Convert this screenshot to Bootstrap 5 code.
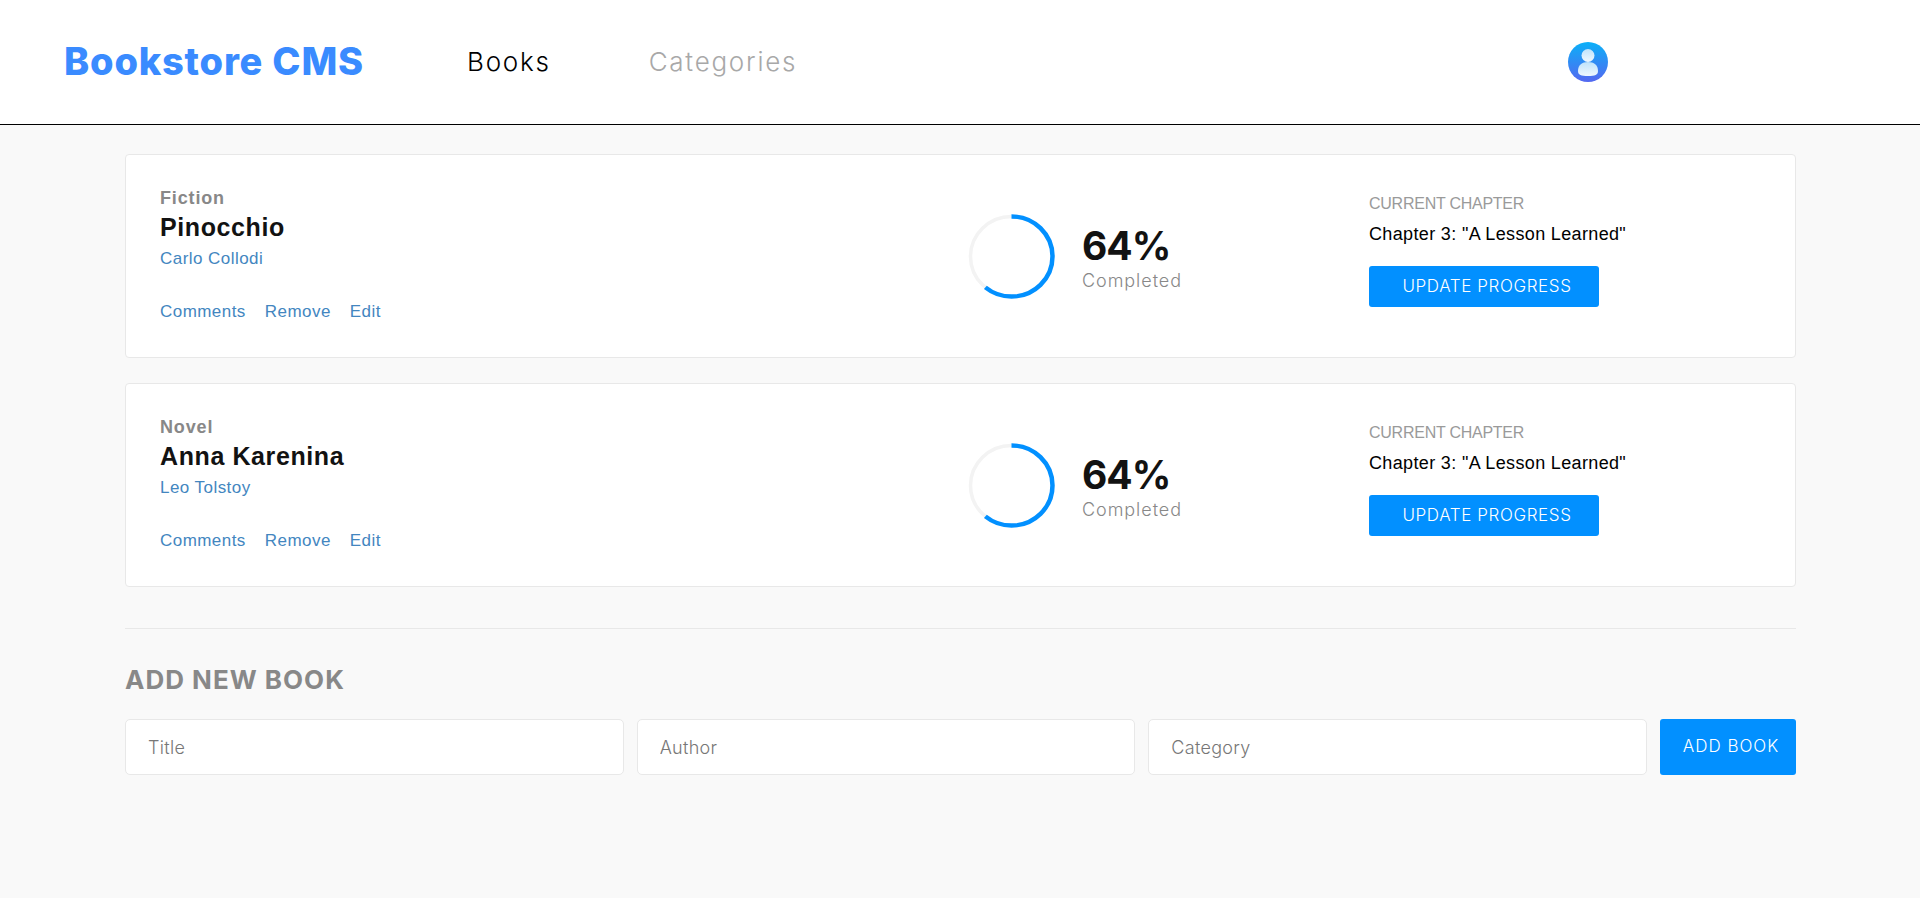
<!DOCTYPE html>
<html lang="en">
<head>
    <meta charset="UTF-8">
    <meta name="viewport" content="width=device-width, initial-scale=1.0">
    <title>Bookstore CMS</title>
    <link href="https://cdn.jsdelivr.net/npm/bootstrap@5.3.0/dist/css/bootstrap.min.css" rel="stylesheet">
    <style>
        body {
            background-color: #f9f9f9;
            font-family: "Liberation Sans", Arial, sans-serif;
        }

        /* Header */
        .top-bar {
            height: 125px;
            background-color: #fff;
            border-bottom: 1px solid #000;
            padding: 0 64px 2px;
        }
        .brand-name {
            font-family: Inter, sans-serif;
            font-weight: 800;
            font-size: 38px;
            letter-spacing: .8px;
            color: #3a8bff;
            width: 403px;
        }
        .menu-link {
            font-family: Inter, sans-serif;
            font-weight: 300;
            font-size: 26px;
            letter-spacing: 1.75px;
            color: #000;
            text-decoration: none;
            margin-right: 98px;
        }
        .menu-link.muted-link { color: #a8a8a8; }
        .avatar-wrap { position: absolute; left: 1568px; top: 42px; }

        /* Books */
        .page-wrap { width: 1671px; margin-left: 125px; padding-top: 29px; }
        .book-panel {
            height: 204px;
            background-color: #fff;
            border: 1px solid #e8e8e8;
            border-radius: 4px;
            padding: 34px;
            margin-bottom: 25px;
        }
        .book-info { width: 808px; }
        .book-genre { font-size: 18px; font-weight: 700; color: #888; letter-spacing: 0.85px; line-height: 20px; margin-top: -1px; }
        .book-title { font-size: 25px; font-weight: 700; color: #121212; line-height: 30px; margin: 4px 0 7px; letter-spacing: .6px; }
        .book-author { font-size: 17px; color: #4386bf; line-height: 20px; letter-spacing: .45px; }
        .book-actions { margin-top: 33px; gap: 19px; }
        .book-actions a { font-size: 17px; color: #4386bf; text-decoration: none; line-height: 20px; letter-spacing: .45px; }

        .book-progress { width: 401px; padding-top: 25px; }
        .percent-num { font-family: Inter, sans-serif; font-weight: 700; font-size: 39px; letter-spacing: -1px; color: #121212; line-height: 46px; margin-top: 1px; }
        .percent-label { font-family: Inter, sans-serif; font-weight: 300; font-size: 18px; letter-spacing: .95px; color: #888; line-height: 20px; margin-top: 2px; }
        .ring-gap { gap: 27px; }

        .chapter-head { font-size: 16px; font-weight: 300; color: #9a9a9a; letter-spacing: -.25px; line-height: 20px; margin-top: 5px; }
        .chapter-name { font-size: 18px; letter-spacing: .35px; color: #000; line-height: 24px; margin: 8px 0 20px; }
        .blue-btn {
            background-color: #0290ff;
            color: #fff;
            font-family: Inter, sans-serif;
            font-weight: 300;
            font-size: 17px;
            letter-spacing: .6px;
            border: 0;
            border-radius: 3px;
            height: 41px;
            width: 230px;
            padding: 0 0 0 6px;
        }
        .blue-btn:hover { background-color: #0290ff; color: #fff; }

        /* Form */
        .page-rule { border: 0; border-top: 1px solid #e8e8e8; opacity: 1; margin: 41px 0 0; }
        .form-head {
            font-family: Inter, sans-serif;
            font-weight: 700;
            font-size: 26px;
            letter-spacing: 1px;
            color: #888;
            line-height: 30px;
            margin: 36px 0 24px;
        }
        .form-gap { gap: 13px; }
        .book-input {
            height: 56px;
            border: 1px solid #e8e8e8;
            border-radius: 5px;
            padding: 0 22px;
            font-family: Inter, sans-serif;
            font-weight: 300;
            font-size: 18px;
            letter-spacing: .3px;
        }
        .book-input::placeholder { color: #777; }
        .add-btn { width: 136px; flex: none; height: 56px; letter-spacing: 1px; padding-left: 6px; }
    </style>
</head>
<body>

<header class="top-bar d-flex align-items-center position-relative">
    <div class="brand-name">Bookstore CMS</div>
    <a class="menu-link" href="#">Books</a>
    <a class="menu-link muted-link" href="#">Categories</a>
    <div class="avatar-wrap">
        <svg width="40" height="40" viewBox="0 0 40 40">
            <defs>
                <linearGradient id="avatarBg" x1="0" y1="0" x2="0" y2="1">
                    <stop offset="0" stop-color="#0ab0f8"/>
                    <stop offset="1" stop-color="#5468f0"/>
                </linearGradient>
                <linearGradient id="avatarFg" x1="0" y1="0" x2="0" y2="1">
                    <stop offset="0" stop-color="#bfe3fb"/>
                    <stop offset="1" stop-color="#f0f8fe"/>
                </linearGradient>
            </defs>
            <circle cx="20" cy="20" r="20" fill="url(#avatarBg)"/>
            <circle cx="20" cy="13.5" r="6.5" fill="url(#avatarFg)"/>
            <path d="M10 29 C10 23 14 20 20 20 C26 20 30 23 30 29 C30 33 27 34 20 34 C13 34 10 33 10 29 Z" fill="url(#avatarFg)"/>
        </svg>
    </div>
</header>

<main class="page-wrap">
    <section class="book-panel d-flex">
        <div class="book-info">
            <div class="book-genre">Fiction</div>
            <h2 class="book-title">Pinocchio</h2>
            <div class="book-author">Carlo Collodi</div>
            <div class="book-actions d-flex">
                <a href="#">Comments</a>
                <a href="#">Remove</a>
                <a href="#">Edit</a>
            </div>
        </div>
        <div class="book-progress d-flex align-items-start ring-gap">
            <svg width="87" height="85" viewBox="0 0 87 87" preserveAspectRatio="none">
                <circle cx="43.5" cy="43.5" r="41" fill="none" stroke="#f3f3f3" stroke-width="3.5"/>
                <circle cx="43.5" cy="43.5" r="41" fill="none" stroke="#0290ff" stroke-width="4.5" pathLength="100" stroke-dasharray="61 100" transform="rotate(-90 43.5 43.5)"/>
            </svg>
            <div class="pt-2">
                <div class="percent-num">64%</div>
                <div class="percent-label">Completed</div>
            </div>
        </div>
        <div>
            <div class="chapter-head">CURRENT CHAPTER</div>
            <div class="chapter-name">Chapter 3: "A Lesson Learned"</div>
            <button class="btn blue-btn" type="button">UPDATE PROGRESS</button>
        </div>
    </section>

    <section class="book-panel d-flex">
        <div class="book-info">
            <div class="book-genre">Novel</div>
            <h2 class="book-title">Anna Karenina</h2>
            <div class="book-author">Leo Tolstoy</div>
            <div class="book-actions d-flex">
                <a href="#">Comments</a>
                <a href="#">Remove</a>
                <a href="#">Edit</a>
            </div>
        </div>
        <div class="book-progress d-flex align-items-start ring-gap">
            <svg width="87" height="85" viewBox="0 0 87 87" preserveAspectRatio="none">
                <circle cx="43.5" cy="43.5" r="41" fill="none" stroke="#f3f3f3" stroke-width="3.5"/>
                <circle cx="43.5" cy="43.5" r="41" fill="none" stroke="#0290ff" stroke-width="4.5" pathLength="100" stroke-dasharray="61 100" transform="rotate(-90 43.5 43.5)"/>
            </svg>
            <div class="pt-2">
                <div class="percent-num">64%</div>
                <div class="percent-label">Completed</div>
            </div>
        </div>
        <div>
            <div class="chapter-head">CURRENT CHAPTER</div>
            <div class="chapter-name">Chapter 3: "A Lesson Learned"</div>
            <button class="btn blue-btn" type="button">UPDATE PROGRESS</button>
        </div>
    </section>

    <hr class="page-rule">
    <h3 class="form-head">ADD NEW BOOK</h3>
    <form class="d-flex form-gap">
        <input class="form-control book-input" type="text" placeholder="Title">
        <input class="form-control book-input" type="text" placeholder="Author">
        <input class="form-control book-input" type="text" placeholder="Category">
        <button class="btn blue-btn add-btn" type="button">ADD BOOK</button>
    </form>
</main>

<script src="https://cdn.jsdelivr.net/npm/bootstrap@5.3.0/dist/js/bootstrap.bundle.min.js"></script>
</body>
</html>
